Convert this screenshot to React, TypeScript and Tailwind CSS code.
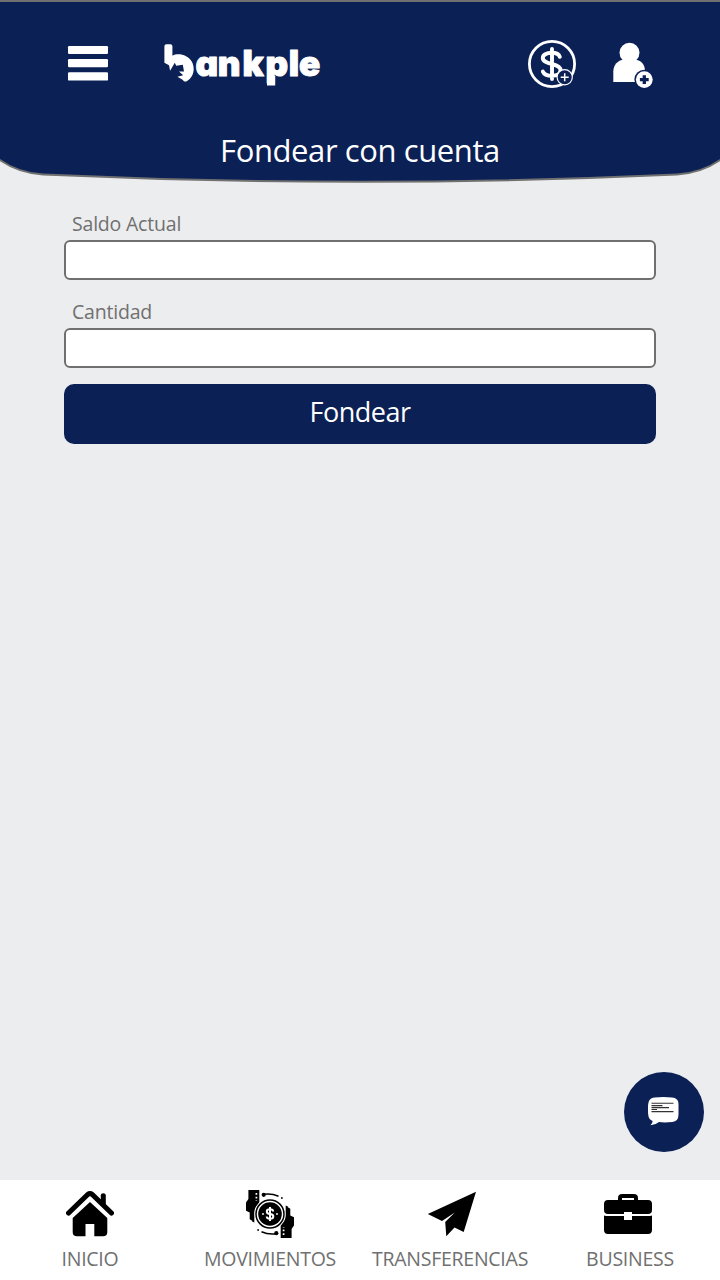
import type { ReactNode } from "react";

function MenuIcon() {
  return (
    <svg className="h-12 w-12" viewBox="0 0 48 48" fill="white">
      <rect x="4" y="6" width="40" height="8" rx="1.2" />
      <rect x="4" y="19" width="40" height="8.2" rx="1.2" />
      <rect x="4" y="32.2" width="40" height="8.4" rx="1.2" />
    </svg>
  );
}

function Logo() {
  return (
    <svg className="ml-12 h-12 w-[164px]" viewBox="0 0 164 48" fill="white">
      <path d="M4.4 6.2Q4.4 4.2 6.4 4.2H10.4Q12.4 4.2 12.4 6.2V15.8C16 13.7 21.5 13.8 26 16.3C31 19 33.8 23.5 33.7 29.3C33.6 35 30.5 39.2 26.8 41.2C25 42.1 23.5 41.2 23 39.9L17.4 36.8L23.2 35.2L19 31.4L24 31.6L22.8 24.8L16.2 25.8L14.8 22.8L10.1 30.7L9 25.2L4.4 22.8Z" />
      <text x="35.6 57.8 82.4 105.4 128.7 139" y="36" className="font-['Inter',sans-serif] text-[35px] font-black [font-feature-settings:'cv11','ss03']" stroke="white" strokeWidth="1" strokeLinejoin="round">ankple</text>
      <rect x="107" y="36" width="8.2" height="9.5" />
    </svg>
  );
}

function FundIcon() {
  return (
    <svg className="h-12 w-12" viewBox="0 0 48 48" fill="none" stroke="white">
      <circle cx="24" cy="24" r="22.6" strokeWidth="2.8" />
      <path d="M24 9V39M31.8 16.8C30.8 13.8 27.5 12.8 23.8 12.8C18.5 12.8 14.8 15 14.8 18C14.8 21.5 19.2 22.8 24 24C29 25.2 32.5 26.8 32.5 30.3C32.5 33.8 29 35.8 24 35.8C19.5 35.8 16 34.5 14.8 31.5" strokeWidth="3.9" strokeLinecap="round" />
      <circle cx="36.7" cy="37.3" r="7.6" fill="#0b2055" strokeWidth="1.2" />
      <path d="M36.7 33.3V41.3M32.7 37.3H40.7" strokeWidth="1.5" />
    </svg>
  );
}

function AddUserIcon() {
  return (
    <svg className="h-12 w-12" viewBox="0 0 48 48">
      <circle cx="21.5" cy="12.7" r="10" fill="white" />
      <path d="M5.3 42V31.5C5.3 25 10 20 15.5 19.7H28C33.5 20.5 37 25 37 31V42Z" fill="white" />
      <circle cx="36.3" cy="39.6" r="9.9" fill="#0b2055" />
      <circle cx="36.3" cy="39.6" r="8.4" fill="white" />
      <path d="M36.3 35.2V44M31.9 39.6H40.7" fill="none" stroke="#0b2055" strokeWidth="3.3" />
    </svg>
  );
}

function HomeIcon() {
  return (
    <svg className="h-12 w-12" viewBox="0 0 48 48">
      <path d="M2.6 23L21.7 4.5Q24 2.8 26.3 4.5L45.4 23" fill="none" stroke="black" strokeWidth="5.2" strokeLinecap="round" strokeLinejoin="round" />
      <path d="M34.8 12V5.2Q34.8 3.2 37.2 3.2Q39.8 3.2 39.8 5.2V18L34.8 13Z" />
      <path d="M24 12L41.3 28V42Q41.3 46.3 37 46.3H28.3V34H19.5V46.3H11Q6.7 46.3 6.7 42V28Z" />
    </svg>
  );
}

function Hand() {
  return (
    <>
      <path d="M2.4 0H13.3V12.2L10.2 16.2C8.5 19 8.2 21.5 8.3 24V32.4L6.1 31.5V30.8L3.7 29.2V22.6L0 20.7V12.5L2.4 9Z" />
      <path d="M10.4 3V11" stroke="white" strokeWidth="1.7" strokeDasharray="1.7 2" />
      <circle cx="17.7" cy="4.8" r="2.1" />
      <path d="M18 4.2C24 3.4 28 4.2 32.5 6.3" fill="none" stroke="black" strokeWidth="1.5" />
      <circle cx="35.9" cy="8" r=".9" />
    </>
  );
}

function MovementsIcon() {
  return (
    <svg className="h-12 w-12" viewBox="0 0 48 48">
      <Hand />
      <g transform="rotate(180 24 24)">
        <Hand />
      </g>
      <circle cx="24" cy="24" r="15.3" fill="white" />
      <circle cx="24" cy="24" r="14" fill="none" stroke="black" strokeWidth="1.5" />
      <circle cx="24" cy="24" r="11.8" />
      <path d="M24 17V31M27.2 21.5Q27 19.3 24 19.3Q20.8 19.3 20.8 21.5Q20.8 23.7 24 24Q27.3 24.3 27.3 26.5Q27.3 28.8 24 28.8Q20.9 28.8 20.7 26.5" fill="none" stroke="white" strokeWidth="2" />
      <circle cx="17" cy="24" r=".9" fill="white" />
      <circle cx="31" cy="24" r=".9" fill="white" />
    </svg>
  );
}

function PlaneIcon() {
  return (
    <svg className="h-12 w-12 overflow-visible" viewBox="0 0 48 48">
      <path d="M1.8 24L50 1.8L37.7 41.9L28.5 37.6L20.3 46.2L19.2 32L28.8 22.4L16 31Z" />
    </svg>
  );
}

function BriefcaseIcon() {
  return (
    <svg className="h-12 w-12" viewBox="0 0 48 48">
      <path d="M16 10V8.2Q16 6 18.2 6H29.8Q32 6 32 8.2V10" fill="none" stroke="black" strokeWidth="4" />
      <path d="M4 10H44Q48 10 48 14V20Q48 24 44 24H28V22H20V24H4Q0 24 0 20V14Q0 10 4 10Z" />
      <path d="M0 25.4Q2 26 4 26H20V30H28V26H44Q46 26 48 25.4V40Q48 44 44 44H4Q0 44 0 40Z" />
    </svg>
  );
}

function NavItem({ icon, label, iconClass = "" }: { icon: ReactNode; label: string; iconClass?: string }) {
  return (
    <a className="flex flex-col items-center pt-[10px] text-[#707070]">
      <span className={iconClass}>{icon}</span>
      <span className="mt-[7px] text-[19.5px] leading-7 tracking-[-0.25px]">{label}</span>
    </a>
  );
}

function Field({ label, className = "" }: { label: string; className?: string }) {
  return (
    <label className={`block ${className}`}>
      <span className="block h-8 px-2 text-[19.5px] leading-[31px] tracking-[-0.2px] text-[#707070]">{label}</span>
      <input className="block h-10 w-full rounded-[6px] border-2 border-[#707070] bg-white px-3 outline-none" />
    </label>
  );
}

export default function App() {
  return (
    <div className="flex h-[1280px] w-[720px] flex-col overflow-hidden bg-[#ecedef] font-['Open_Sans','Noto_Sans',sans-serif]">
      <header className="relative isolate h-[184px] shrink-0 text-white">
        <svg className="absolute inset-0 -z-10 h-[184px] w-[720px]" viewBox="0 0 720 184">
          <path d="M-3 1H723V158Q703 173 677 174.5Q360 189 43 174.5Q17 173-3 158Z" fill="#0b2055" stroke="#707070" strokeWidth="2" />
        </svg>
        <div className="flex items-center px-16 pt-10">
          <MenuIcon />
          <Logo />
          <div className="ml-auto flex gap-8">
            <FundIcon />
            <AddUserIcon />
          </div>
        </div>
        <h1 className="mt-10 text-center text-[31px] leading-[44px] tracking-[-0.4px]">Fondear con cuenta</h1>
      </header>
      <main className="flex flex-1 flex-col px-16 pt-6">
        <Field label="Saldo Actual" />
        <Field label="Cantidad" className="mt-4" />
        <button className="mt-4 h-[60px] rounded-[10px] bg-[#0b2055] pb-[3px] text-[27px] tracking-[-0.5px] text-white">Fondear</button>
        <button aria-label="Chat" className="mt-auto mb-7 -mr-12 flex h-20 w-20 items-center justify-center self-end rounded-full bg-[#0b2055]">
          <svg className="h-8 w-8" viewBox="0 0 32 32" fill="none">
            <path d="M6.5 1.5Q15.3 .7 24 1.5Q30.5 2 30.5 8V18.5Q30.5 25.5 24.3 26Q17 26.8 11 26.1Q8 28.8 2.5 29.2Q4.8 26.5 4.6 25Q.6 23.5 .3 19Q-.5 13 .3 7.5Q1 2 6.5 1.5Z" fill="white" />
            <path d="M3.5 7.3H25.5M3.5 9.6H14.5M3.5 11.6H21M3.5 13.5H9M3.5 15.6H25.5" stroke="#333" strokeWidth="1.1" />
          </svg>
        </button>
      </main>
      <nav className="grid h-[100px] shrink-0 grid-cols-4 bg-white">
        <NavItem icon={<HomeIcon />} label="INICIO" />
        <NavItem icon={<MovementsIcon />} label="MOVIMIENTOS" />
        <NavItem icon={<PlaneIcon />} label="TRANSFERENCIAS" />
        <NavItem icon={<BriefcaseIcon />} label="BUSINESS" iconClass="-translate-x-0.5" />
      </nav>
    </div>
  );
}
